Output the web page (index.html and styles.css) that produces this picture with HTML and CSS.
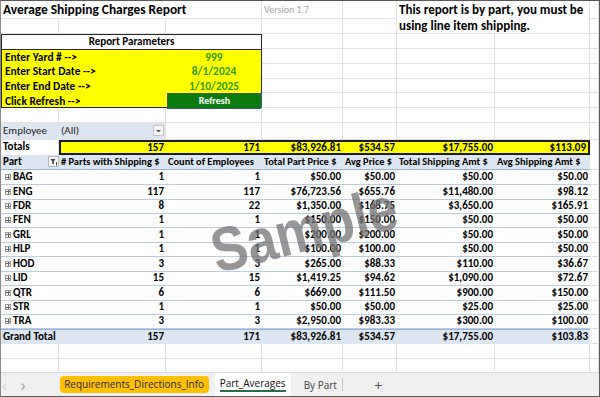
FILE: index.html
```html
<!DOCTYPE html>
<html lang="en">
<head>
    <meta charset="UTF-8">
    <title>Part_Averages</title>
    <link rel="stylesheet" href="styles.css">
</head>
<body>
<div class="window">
    <div class="sheet">
        <!-- top block: title, note, parameters -->
        <div class="top">
            <div class="cell title">Average Shipping Charges Report</div>
            <div class="cell version">Version 1.7</div>
            <div class="cell"></div>
            <div class="cell note">This report is by part, you must be using line item shipping.</div>
            <div class="cell"></div>

            <div class="cell"></div><div class="cell"></div><div class="cell"></div><div class="cell"></div><div class="cell"></div><div class="cell"></div>

            <div class="params">
                <div class="params-head">Report Parameters</div>
                <div class="p-label">Enter Yard # --&gt;</div><div class="p-value">999</div>
                <div class="p-label">Enter Start Date --&gt;</div><div class="p-value">8/1/2024</div>
                <div class="p-label">Enter End Date --&gt;</div><div class="p-value">1/10/2025</div>
                <div class="p-label">Click Refresh --&gt;</div><div class="p-button">Refresh</div>
            </div>
            <div class="cell"></div><div class="cell"></div><div class="cell"></div><div class="cell"></div><div class="cell"></div>
            <div class="cell"></div><div class="cell"></div><div class="cell"></div><div class="cell"></div><div class="cell"></div>
            <div class="cell"></div><div class="cell"></div><div class="cell"></div><div class="cell"></div><div class="cell"></div>
            <div class="cell"></div><div class="cell"></div><div class="cell"></div><div class="cell"></div><div class="cell"></div>
            <div class="cell"></div><div class="cell"></div><div class="cell"></div><div class="cell"></div><div class="cell"></div>

            <div class="cell"></div><div class="cell"></div><div class="cell"></div><div class="cell"></div>
            <div class="cell"></div><div class="cell"></div><div class="cell"></div><div class="cell"></div>
        </div>

        <!-- page filter -->
        <div class="row filter-row">
            <div class="cell filt">Employee</div>
            <div class="cell filt filt-value">(All)<span class="dropdown"><svg width="7" height="4" viewBox="0 0 7 4"><path d="M1 1h5L3.5 3.5z" fill="#555"/></svg></span></div>
            <div class="cell"></div><div class="cell"></div><div class="cell"></div><div class="cell"></div><div class="cell"></div><div class="cell"></div>
        </div>

        <div class="row totals-row">
            <div class="cell bold">Totals</div>
            <div class="tot first">157</div>
            <div class="tot">171</div>
            <div class="tot">$83,926.81</div>
            <div class="tot">$534.57</div>
            <div class="tot">$17,755.00</div>
            <div class="tot last">$113.09</div>
            <div class="cell"></div>
        </div>

        <!-- pivot table -->
        <div class="row pivot-head">
            <div class="ph ph-part">Part<span class="filter-btn"><svg width="8" height="8" viewBox="0 0 8 8"><path d="M0.5 1h5L3.8 3.4V6.5L2.2 5.6V3.4z" fill="#444"/><path d="M6.5 4v3.5" stroke="#444" stroke-width="1"/></svg></span></div>
            <div class="ph">#&nbsp;Parts with Shipping $</div>
            <div class="ph">Count of Employees</div>
            <div class="ph">Total Part Price $</div>
            <div class="ph">Avg Price $</div>
            <div class="ph">Total Shipping Amt $</div>
            <div class="ph">Avg Shipping Amt $</div>
            <div class="cell"></div>
        </div>
        <div id="pivotBody"></div>
        <div class="row pivot-total">
            <div class="pc pc-label">Grand Total</div>
            <div class="pc">157</div>
            <div class="pc">171</div>
            <div class="pc">$83,926.81</div>
            <div class="pc">$534.57</div>
            <div class="pc">$17,755.00</div>
            <div class="pc">$103.83</div>
            <div class="cell"></div>
        </div>

        <div class="row blank">
            <div class="cell"></div><div class="cell"></div><div class="cell"></div><div class="cell"></div><div class="cell"></div><div class="cell"></div><div class="cell"></div><div class="cell"></div>
        </div>
        <div class="row blank">
            <div class="cell"></div><div class="cell"></div><div class="cell"></div><div class="cell"></div><div class="cell"></div><div class="cell"></div><div class="cell"></div><div class="cell"></div>
        </div>

        <div class="watermark">Sample</div>
    </div>

    <div class="tabs">
        <span class="nav nav-prev">&lsaquo;</span>
        <span class="nav nav-next">&rsaquo;</span>
        <span class="tab tab-yellow">Requirements_Directions_Info</span>
        <span class="tab tab-active"><span class="tab-text">Part_Averages</span></span>
        <span class="tab tab-plain">By Part</span>
        <span class="tab-sep"></span>
        <span class="tab-add">+</span>
    </div>
</div>

<script>
    const parts = [
        ['BAG', 1, 1, '$50.00', '$50.00', '$50.00', '$50.00'],
        ['ENG', 117, 117, '$76,723.56', '$655.76', '$11,480.00', '$98.12'],
        ['FDR', 8, 22, '$1,350.00', '$168.75', '$3,650.00', '$165.91'],
        ['FEN', 1, 1, '$150.00', '$150.00', '$50.00', '$50.00'],
        ['GRL', 1, 1, '$200.00', '$200.00', '$50.00', '$50.00'],
        ['HLP', 1, 1, '$100.00', '$100.00', '$50.00', '$50.00'],
        ['HOD', 3, 3, '$265.00', '$88.33', '$110.00', '$36.67'],
        ['LID', 15, 15, '$1,419.25', '$94.62', '$1,090.00', '$72.67'],
        ['QTR', 6, 6, '$669.00', '$111.50', '$900.00', '$150.00'],
        ['STR', 1, 1, '$50.00', '$50.00', '$25.00', '$25.00'],
        ['TRA', 3, 3, '$2,950.00', '$983.33', '$300.00', '$100.00']
    ];

    const body = document.getElementById('pivotBody');
    parts.forEach(function (p) {
        const row = document.createElement('div');
        row.className = 'row pivot-row';
        let html = '<div class="pc pc-label"><span class="expand"></span>' + p[0] + '</div>';
        for (let i = 1; i < p.length; i++) {
            html += '<div class="pc">' + p[i] + '</div>';
        }
        html += '<div class="cell"></div>';
        row.innerHTML = html;
        body.appendChild(row);
    });
</script>
</body>
</html>
```

FILE: styles.css
```css
* {
    box-sizing: border-box;
}
body {
    margin: 0;
    background: #fff;
    font-family: Carlito, Calibri, Lato, "Open Sans", sans-serif;
    font-size: 11px;
    color: #000;
}
.window {
    width: 600px;
    height: 397px;
    border: 1px solid #5a5a5a;
    border-left-color: #8a8a8a;
    display: flex;
    flex-direction: column;
    overflow: hidden;
}
.sheet {
    position: relative;
    flex: 1;
    overflow: hidden;
}

/* shared column template */
.top,
.row {
    display: grid;
    grid-template-columns: 58px 107px 96px 81px 54px 98px 95px 1fr;
}
.top {
    grid-template-rows: 18px repeat(7, 14.9px);
}
.cell {
    border-right: 1px solid #e3e3e3;
    border-bottom: 1px solid #e3e3e3;
    white-space: nowrap;
    line-height: 14px;
    padding: 0 2px;
}
.bold {
    font-weight: bold;
}

.title {
    grid-column: span 3;
    font-size: 13.4px;
    font-weight: bold;
    line-height: 18px;
    padding-left: 2px;
}
.version {
    color: #a6a6a6;
    font-size: 10px;
    line-height: 18px;
}
.note {
    grid-column: 6 / 8;
    grid-row: 1 / 3;
    white-space: normal;
    font-size: 13px;
    font-weight: bold;
    line-height: 15.5px;
    padding: 1px 0 0 2px;
    background: #fff;
}

/* report parameters */
.params {
    grid-column: 1 / 4;
    grid-row: 3 / 8;
    display: grid;
    grid-template-columns: 165px 1fr;
    grid-template-rows: repeat(5, 1fr);
    border: 1px solid #262626;
    background: #ffff00;
    font-weight: bold;
    font-size: 11.4px;
}
.params-head {
    grid-column: span 2;
    background: #fff;
    border-bottom: 1px solid #262626;
    text-align: center;
    line-height: 14px;
    font-size: 11px;
}
.p-label {
    padding-left: 3px;
    line-height: 14.6px;
}
.p-value {
    text-align: center;
    color: #2e9b00;
    line-height: 14.6px;
}
.p-button {
    background: #0d7c10;
    color: #fff;
    text-align: center;
    font-size: 10px;
    line-height: 14px;
    border: 1px solid #3b5b7a;
    margin: -1px -1px -1px 0;
}

/* filter + totals */
.filter-row {
    height: 16.7px;
}
.filter-row .cell {
    line-height: 15px;
}
.filt {
    background: #dde5f0;
    color: #222;
    border-right-color: #dde5f0;
}
.filt-value {
    position: relative;
    border-right-color: #e3e3e3;
}
.dropdown {
    position: absolute;
    right: 1px;
    top: 2px;
    width: 11px;
    height: 11px;
    background: #f7f7f7;
    border: 1px solid #c6c6c6;
    display: flex;
    align-items: center;
    justify-content: center;
}
.totals-row {
    height: 15.3px;
}
.totals-row .cell {
    line-height: 14px;
    border-bottom: none;
}
.tot {
    background: #ffff00;
    border-top: 2px solid #1a1a1a;
    border-bottom: 2px solid #1a1a1a;
    text-align: right;
    font-weight: bold;
    line-height: 11px;
    padding-right: 2px;
}
.tot.first {
    border-left: 2px solid #1a1a1a;
}
.tot.last {
    border-right: 2px solid #1a1a1a;
}

/* pivot table */
.pivot-head {
    height: 15px;
}
.ph {
    background: #dce6f1;
    border-bottom: 1px solid #95b3d7;
    font-weight: bold;
    font-size: 10.4px;
    white-space: nowrap;
    line-height: 14px;
    padding-left: 2px;
    overflow: visible;
}
.ph-part {
    position: relative;
    font-size: 11px;
}
.filter-btn {
    position: absolute;
    right: 0;
    top: 1px;
    width: 11px;
    height: 11px;
    background: #f7f7f7;
    border: 1px solid #b9b9b9;
    display: flex;
    align-items: center;
    justify-content: center;
}
.pivot-row {
    height: 14.43px;
}
.pc {
    border-bottom: 1px solid #b8cce4;
    text-align: right;
    font-weight: bold;
    line-height: 14px;
    padding-right: 2px;
    white-space: nowrap;
}
.pc-label {
    text-align: left;
    padding-left: 4px;
    display: flex;
    align-items: center;
}
.expand {
    display: inline-block;
    width: 6px;
    height: 6px;
    margin-right: 2px;
    border: 1px solid #9a9a9a;
    background:
        linear-gradient(#666, #666) center / 4px 1px no-repeat,
        linear-gradient(#666, #666) center / 1px 4px no-repeat,
        #f2f2f2;
}
.pivot-total {
    height: 15px;
}
.pivot-total .pc {
    background: #dce6f1;
    border-top: 1px solid #95b3d7;
    border-bottom: none;
}
.pivot-total .cell {
    border-bottom: 1px solid #e3e3e3;
}
.pivot-total .pc-label {
    padding-left: 2px;
}
.blank {
    height: 15px;
}

.watermark {
    position: absolute;
    left: 193px;
    top: 198px;
    font-family: "Liberation Sans", Arial, sans-serif;
    font-weight: bold;
    font-size: 62px;
    line-height: 1;
    color: rgba(115, 115, 115, 0.75);
    transform: rotate(-14deg) scaleX(0.86);
    pointer-events: none;
}

/* sheet tabs */
.tabs {
    height: 24px;
    flex: none;
    background: #f0f0f0;
    border-top: 1px solid #dadada;
    display: flex;
    align-items: center;
    font-family: "Open Sans", "Noto Sans", sans-serif;
    font-size: 10px;
}
.nav {
    color: #b5b5b5;
    font-size: 16px;
    line-height: 20px;
}
.nav-prev {
    margin-left: 1px;
    color: #d0d0d0;
}
.nav-next {
    margin-left: 14px;
    color: #9a9a9a;
}
.tab {
    white-space: nowrap;
}
.tab-yellow {
    margin-left: 34px;
    background: #ffc000;
    border-radius: 4px;
    height: 17px;
    line-height: 17px;
    width: 149px;
    text-align: center;
    color: #262626;
}
.tab-active {
    margin-left: 6px;
    background: #fff;
    height: 23px;
    width: 76px;
    display: flex;
    align-items: center;
    justify-content: center;
    align-self: flex-end;
}
.tab-text {
    border-bottom: 2px solid #217346;
    line-height: 13px;
    color: #111;
}
.tab-plain {
    margin-left: 13px;
    color: #444;
}
.tab-sep {
    width: 1px;
    height: 13px;
    background: #c8c8c8;
    margin-left: 5px;
}
.tab-add {
    margin-left: 31px;
    font-size: 15px;
    color: #555;
}
```
